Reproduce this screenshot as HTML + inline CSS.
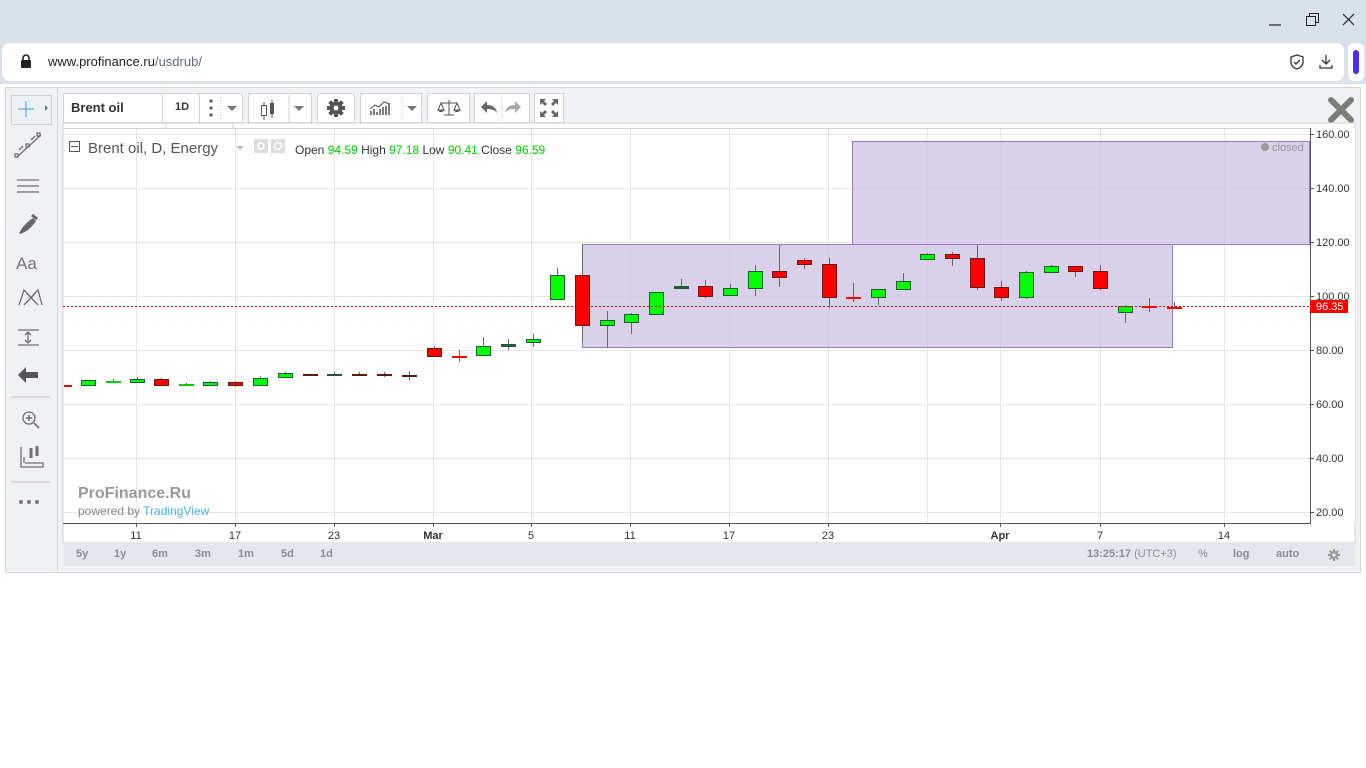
<!DOCTYPE html>
<html><head><meta charset="utf-8"><style>
*{margin:0;padding:0;box-sizing:border-box}
body{width:1366px;height:768px;background:#fff;font-family:"Liberation Sans",Arial,sans-serif;position:relative;overflow:hidden}
.abs{position:absolute}
.tb{position:absolute;top:93px;height:30px;background:#fff;border:1px solid #cfd2d6;}
.bb{position:absolute;top:544px;height:21px;font-size:11px;font-weight:bold;color:#8a8d92;line-height:21px}
</style></head><body>
<div class="abs" style="left:0;top:0;width:1366px;height:84px;background:#d9e1ea"></div>
<svg class="abs" style="left:1260px;top:8px" width="100" height="26"><path d="M9 17h12" stroke="#222" stroke-width="1.2"/><rect x="46.5" y="8.5" width="9" height="9" fill="none" stroke="#222"/><path d="M49.5 8.5v-3h9v9h-3" fill="none" stroke="#222"/><path d="M83 6l11 11M94 6l-11 11" stroke="#222" stroke-width="1.2"/></svg>
<div class="abs" style="left:2px;top:43px;width:1342px;height:38px;background:#fff;border-radius:8px"></div>
<div class="abs" style="left:1348px;top:43px;width:16px;height:38px;background:#fff;border-radius:6px"></div>
<div class="abs" style="left:1353px;top:50px;width:6px;height:24px;background:#4b2cf0;border-radius:3px"></div>
<svg class="abs" style="left:20px;top:54px" width="14" height="16"><rect x="1" y="6" width="10" height="8" rx="1" fill="#222"/><path d="M3 7V4a3 3 0 0 1 6 0v3" fill="none" stroke="#222" stroke-width="1.6"/></svg>
<div class="abs" style="left:48px;top:54px;font-size:13px;color:#222">www.<span>profinance.ru</span><span style="color:#5f6b7a">/usdrub/</span></div>
<svg class="abs" style="left:1288px;top:53px" width="50" height="18"><path d="M9 2l6 2v5c0 4-3 6-6 7-3-1-6-3-6-7V4z" fill="none" stroke="#333" stroke-width="1.3"/><path d="M6 9l2 2 4-4" fill="none" stroke="#333" stroke-width="1.3"/><path d="M38 2v9M34 7l4 4 4-4M32 12v3h12v-3" fill="none" stroke="#333" stroke-width="1.3"/></svg>
<div class="abs" style="left:5px;top:87px;width:1356px;height:486px;background:#f0f1f4;border:1px solid #d3d6da"></div>
<div class="abs" style="left:57px;top:88px;width:1px;height:484px;background:#d3d6da"></div>
<div class="abs" style="left:11px;top:95px;width:41px;height:30px;background:#eef1f4;border:1px solid #d0d4d8"></div>
<svg class="abs" style="left:10px;top:92px" width="46" height="420" fill="none" stroke="#707070" stroke-width="1.3">
<path d="M8 17h16M16 9v16" stroke="#5ab4e6"/><path d="M35 13l3 3-3 3z" fill="#777" stroke="none"/>
<path d="M7 65l24-22M9 58l4-4M21 48l4-4" /><rect x="5" y="62" width="3" height="3"/><rect x="16" y="52" width="3" height="3"/><rect x="27" y="41" width="3" height="3"/>
<path d="M7 88h22M7 94h22M7 100h22"/>
<path d="M9 142c2-6 8-12 14-16l3 3c-4 6-10 12-17 13z" fill="#666" stroke="none"/><path d="M22 123l5 4" stroke="#666" stroke-width="3"/>
<text x="6" y="177" font-size="17" fill="#777" stroke="none" font-family="Liberation Sans">Aa</text>
<path d="M9 213l5-15 7 8 7-8 4 15M14 198l14 15M28 198l-14 15"/>
<path d="M8 238h21M8 253h21M18 240v11M15 243l3-3 3 3M15 248l3 3 3-3"/>
<path d="M8 283l8-8v5h12v6H16v5z" fill="#555" stroke="none"/>
<line x1="1" y1="305" x2="40" y2="305" stroke="#ccc"/>
<circle cx="19" cy="326" r="6"/><path d="M24 331l5 5M16 326h6M19 323v6" stroke-width="1.6"/>
<path d="M11 355v20h22v-4h-18M14 371v-6" /><path d="M21 356v10M27 354v10" stroke-width="3"/>
<line x1="1" y1="390" x2="40" y2="390" stroke="#ccc"/>
<circle cx="11" cy="410" r="2" fill="#777" stroke="none"/><circle cx="19" cy="410" r="2" fill="#777" stroke="none"/><circle cx="27" cy="410" r="2" fill="#777" stroke="none"/>
</svg>
<div class="tb" style="left:63px;width:180px"></div>
<div class="abs" style="left:71px;top:100px;font-size:13px;font-weight:bold;color:#333">Brent oil</div>
<div class="abs" style="left:162px;top:94px;width:1px;height:28px;background:#cfd2d6"></div>
<div class="abs" style="left:175px;top:101px;font-size:11px;font-weight:bold;color:#333">1D</div>
<div class="abs" style="left:199px;top:94px;width:1px;height:28px;background:#cfd2d6"></div>
<svg class="abs" style="left:200px;top:94px" width="42" height="28"><circle cx="11" cy="7" r="1.6" fill="#555"/><circle cx="11" cy="14" r="1.6" fill="#555"/><circle cx="11" cy="21" r="1.6" fill="#555"/><path d="M21 3v24" stroke="#bbb" stroke-dasharray="1 2"/><path d="M27 12h10l-5 5z" fill="#777"/></svg>
<div class="tb" style="left:248px;width:64px"></div>
<svg class="abs" style="left:249px;top:94px" width="62" height="28"><path d="M15 8v18M23 6v18" stroke="#555"/><rect x="12.5" y="11.5" width="5" height="10" fill="#fff" stroke="#555"/><rect x="21" y="9" width="4" height="11" fill="#555"/><path d="M40 1v27" stroke="#cfd2d6"/><path d="M45 12h10l-5 5z" fill="#777"/></svg>
<div class="tb" style="left:317px;width:38px"></div>
<svg class="abs" style="left:325px;top:97px" width="22" height="22"><g fill="#555" transform="translate(11 11)"><rect x="-2" y="-9" width="4" height="18"/><rect x="-2" y="-9" width="4" height="18" transform="rotate(45)"/><rect x="-2" y="-9" width="4" height="18" transform="rotate(90)"/><rect x="-2" y="-9" width="4" height="18" transform="rotate(135)"/><circle r="6.5"/><circle r="2.5" fill="#fff"/></g></svg>
<div class="tb" style="left:360px;width:62px"></div>
<svg class="abs" style="left:361px;top:94px" width="60" height="28"><path d="M10 21v-4M13 21v-6M16 21v-3M19 21v-6M22 21v-8M25 21v-9M28 21v-11" stroke="#555" stroke-width="1.5"/><path d="M9 15l5-4 4 2 5-5 6 2" fill="none" stroke="#555"/><path d="M41 3v24" stroke="#bbb" stroke-dasharray="1 2"/><path d="M46 12h10l-5 5z" fill="#777"/></svg>
<div class="tb" style="left:427px;width:43px"></div>
<svg class="abs" style="left:437px;top:97px" width="24" height="22"><path d="M12 3v15M4 6h16M7 18h10" stroke="#555"/><path d="M4 6l-3 7h6zM20 6l-3 7h6z" fill="none" stroke="#555"/><path d="M1 13a3 2 0 0 0 6 0M17 13a3 2 0 0 0 6 0" fill="#555"/></svg>
<div class="tb" style="left:474px;width:56px"></div>
<svg class="abs" style="left:475px;top:94px" width="54" height="28"><path d="M6 13l6-6v4c5 0 9 2 10 8-2-3-5-4-10-4v4z" fill="#666"/><path d="M27 1v26" stroke="#e2e4e6"/><path d="M46 13l-6-6v4c-5 0-9 2-10 8 2-3 5-4 10-4v4z" fill="#aaa"/></svg>
<div class="tb" style="left:534px;width:30px"></div>
<svg class="abs" style="left:538px;top:97px" width="22" height="22" fill="#666"><path d="M2 2h6l-2 2 3 3-2 2-3-3-2 2zM20 2v6l-2-2-3 3-2-2 3-3-2-2zM2 20v-6l2 2 3-3 2 2-3 3 2 2zM20 20h-6l2-2-3-3 2-2 3 3 2-2z"/></svg>
<svg class="abs" style="left:1327px;top:97px" width="28" height="26"><path d="M4 3l20 20M24 3L4 23" stroke="#7b7e78" stroke-width="6" stroke-linecap="round"/></svg>
<svg class="abs" style="left:0;top:0" width="1366" height="600" font-family="Liberation Sans">
<defs><clipPath id="cp"><rect x="64" y="128" width="1246" height="395"/></clipPath></defs>
<rect x="63" y="123" width="1292" height="420" fill="#fff" stroke="#d0d3d6"/>
<g stroke="#e6e6e6" stroke-width="1">
<path d="M63.5 134.5H1310M63.5 188.5H1310M63.5 242.5H1310M63.5 296.5H1310M63.5 350.5H1310M63.5 404.5H1310M63.5 458.5H1310M63.5 512.5H1310"/>
<path d="M136.5 128V523M235.5 128V523M334.5 128V523M433.5 128V523M531.5 128V523M630.5 128V523M729.5 128V523M828.5 128V523M927.5 128V523M1000.5 128V523M1100.5 128V523M1224.5 128V523"/>
</g>
<path d="M63 128.5H1310M166 123v5M233 123v5" stroke="#d0d3d6"/>
<rect x="582.5" y="244.5" width="590" height="103" fill="#cfc5e3" fill-opacity="0.8" stroke="#9a7ac7"/>
<rect x="852.5" y="141.5" width="457" height="103" fill="#cfc5e3" fill-opacity="0.8" stroke="#9a7ac7"/>
<g id="c" stroke-width="1" clip-path="url(#cp)"></g>
<line x1="63" y1="306.5" x2="1310" y2="306.5" stroke="#f00" stroke-dasharray="2 2"/>
<path d="M1310.5 128V523.5H63" stroke="#555" fill="none"/>
<rect x="1311" y="128" width="44" height="395" fill="#fff"/>
<g font-size="11" fill="#333">
<text x="1316" y="138">160.00</text><text x="1316" y="192">140.00</text><text x="1316" y="246">120.00</text><text x="1316" y="300">100.00</text><text x="1316" y="354">80.00</text><text x="1316" y="408">60.00</text><text x="1316" y="462">40.00</text><text x="1316" y="516">20.00</text>
</g>
<path d="M1310 134.5h4M1310 188.5h4M1310 242.5h4M1310 296.5h4M1310 350.5h4M1310 404.5h4M1310 458.5h4M1310 512.5h4" stroke="#555"/>
<rect x="1310" y="300" width="38" height="13" fill="#f00"/><text x="1316" y="310" font-size="11" fill="#fff">96.35</text>
<g font-size="11" fill="#333" text-anchor="middle">
<text x="136" y="539">11</text><text x="235" y="539">17</text><text x="334" y="539">23</text><text x="433" y="539" font-weight="bold">Mar</text><text x="531" y="539">5</text><text x="630" y="539">11</text><text x="729" y="539">17</text><text x="828" y="539">23</text><text x="1000" y="539" font-weight="bold">Apr</text><text x="1100" y="539">7</text><text x="1224" y="539">14</text>
</g>
<path d="M136.5 523v4M235.5 523v4M334.5 523v4M433.5 523v4M531.5 523v4M630.5 523v4M729.5 523v4M828.5 523v4M1000.5 523v4M1100.5 523v4M1224.5 523v4" stroke="#555"/>
<rect x="69.5" y="141.5" width="10" height="10" fill="none" stroke="#555"/><path d="M71 146.5h7" stroke="#555"/>
<text x="88" y="153" font-size="15" fill="#555">Brent oil, D, Energy</text>
<path d="M236 146h8l-4 4z" fill="#bbb"/>
<rect x="254" y="139" width="14" height="14" fill="#ddd"/><circle cx="261" cy="146" r="3" fill="none" stroke="#fff" stroke-width="1.5"/>
<rect x="271" y="139" width="14" height="14" fill="#ddd"/><circle cx="278" cy="146" r="3.5" fill="none" stroke="#fff" stroke-width="2" stroke-dasharray="2 1"/>
<g font-size="12"><text x="295" y="154" fill="#333">Open <tspan fill="#0c0">94.59</tspan> High <tspan fill="#0c0">97.18</tspan> Low <tspan fill="#0c0">90.41</tspan> Close <tspan fill="#0c0">96.59</tspan></text></g>
<circle cx="1265" cy="147" r="4" fill="#999"/><text x="1272" y="151" font-size="11" fill="#999">closed</text>
<text x="78" y="498" font-size="16" font-weight="bold" fill="#999">ProFinance.Ru</text>
<text x="78" y="515" font-size="12" fill="#888">powered by <tspan fill="#4ab4e6">TradingView</tspan></text>
</svg>
<div class="abs" style="left:64px;top:543px;width:1291px;height:23px;background:#e4e7eb"></div>
<div class="bb" style="left:76px">5y</div><div class="bb" style="left:114px">1y</div><div class="bb" style="left:152px">6m</div><div class="bb" style="left:195px">3m</div><div class="bb" style="left:238px">1m</div><div class="bb" style="left:281px">5d</div><div class="bb" style="left:320px">1d</div>
<div class="bb" style="left:1087px">13:25:17 <span style="font-weight:normal">(UTC+3)</span></div>
<div class="bb" style="left:1198px;font-weight:normal">%</div><div class="bb" style="left:1233px">log</div><div class="bb" style="left:1276px">auto</div>
<svg class="abs" style="left:1327px;top:548px" width="14" height="14"><g fill="#999" transform="translate(7 7)"><rect x="-1" y="-6" width="2" height="12"/><rect x="-1" y="-6" width="2" height="12" transform="rotate(45)"/><rect x="-1" y="-6" width="2" height="12" transform="rotate(90)"/><rect x="-1" y="-6" width="2" height="12" transform="rotate(135)"/><circle r="4"/><circle r="1.8" fill="#e4e7eb"/></g></svg>
<script>
var d=[[64,385,385,385,385,'r'],[88,380,380,385,385,'g'],[113,379,381,382,382,'g'],[137,377,379,382,383,'g'],[161,378,379,385,386,'r'],[186,383,384,385,385,'g'],[210,381,382,385,385,'g'],[235,381,382,385,387,'r'],[260,376,378,385,385,'g'],[285,372,373,377,377,'g'],[310,374,374,375,375,'dr'],[334,372,374,375,376,'dg'],[359,372,374,375,376,'dr'],[384,372,374,375,377,'dr'],[409,371,375,376,380,'dr'],[434,346,348,356,356,'r'],[459,350,356,356,362,'r'],[483,337,346,355,355,'g'],[508,339,344,346,350,'dg'],[533,334,339,342,347,'g'],
[557,268,275,299,300,'g'],[582,245,275,325,341,'r'],[607,311,320,325,348,'g'],[631,313,314,322,334,'g'],[656,292,292,314,314,'g'],[681,279,286,288,288,'dg'],[705,280,286,296,298,'r'],[730,284,288,295,295,'g'],[755,265,271,288,296,'g'],[779,245,271,277,287,'r'],[804,258,260,264,269,'r'],[829,258,264,297,308,'r'],[853,283,297,297,302,'r'],[878,289,289,297,305,'g'],[903,273,281,289,289,'g'],[927,253,254,259,259,'g'],[952,252,254,258,266,'r'],[977,245,258,287,290,'r'],[1001,281,287,297,301,'r'],[1026,271,272,297,299,'g'],[1051,265,266,272,272,'g'],[1075,266,266,271,277,'r'],[1100,265,271,288,290,'r'],[1125,305,306,312,323,'g'],[1149,298,306,307,312,'r'],[1174,302,307,307,307,'r']];
var col={r:'#ff0000',g:'#00ff00',dr:'#5c1a12',dg:'#1e5a36'};
var s='';d.forEach(function(c){var x=c[0],f=col[c[5]];s+='<line x1="'+(x+.5)+'" y1="'+c[1]+'" x2="'+(x+.5)+'" y2="'+c[4]+'" stroke="#666"/>';var h=c[3]-c[2];if(h<2){s+='<rect x="'+(x-7)+'" y="'+c[2]+'" width="15" height="2" fill="'+(c[5].length>1?f:(c[5]=='r'?'#f00':'#0c0'))+'"/>';}else{s+='<rect x="'+(x-6.5)+'" y="'+(c[2]+.5)+'" width="14" height="'+h+'" fill="'+f+'" stroke="'+(c[5]=='r'?'#6b1a10':'#1e5a36')+'"/>';}});
document.getElementById('c').innerHTML=s;
</script>
</body></html>
